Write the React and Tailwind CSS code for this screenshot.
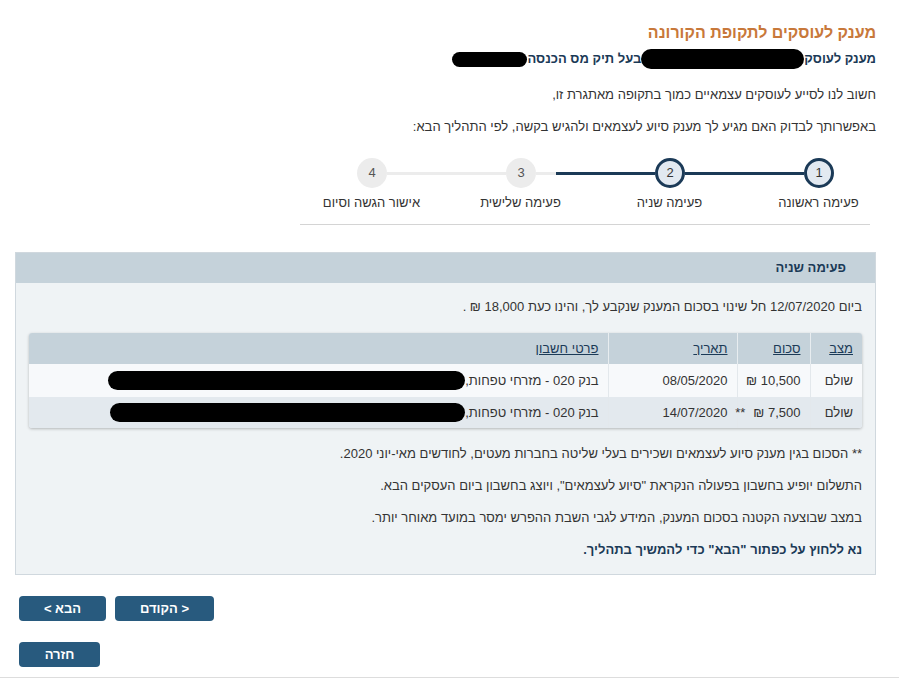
import React from "react";

const steps = [
  { n: 4, label: "אישור הגשה וסיום", done: false },
  { n: 3, label: "פעימה שלישית", done: false },
  { n: 2, label: "פעימה שניה", done: true },
  { n: 1, label: "פעימה ראשונה", done: true },
];

const rows = [
  { status: "שולם", sum: "10,500 ₪", star: false, date: "08/05/2020", bank: "בנק 020 - מזרחי טפחות,", blob: "w-[357px]", bg: "bg-[#f7f9fb]" },
  { status: "שולם", sum: "7,500 ₪", star: true, date: "14/07/2020", bank: "בנק 020 - מזרחי טפחות,", blob: "w-[355px]", bg: "bg-[#e3e9ee]" },
];

function Circle({ n, done }) {
  return done ? (
    <div className="w-[30px] h-[30px] rounded-full border-[3px] border-[#1b3a57] bg-[#e2e9f1] flex items-center justify-center text-[13px] text-[#333]">
      {n}
    </div>
  ) : (
    <div className="w-[30px] h-[30px] rounded-full bg-[#ececec] flex items-center justify-center text-[13px] text-[#555]">
      {n}
    </div>
  );
}

export default function App() {
  return (
    <div
      dir="rtl"
      className="min-h-screen bg-white text-[13px] text-[#333] pr-[23px] pl-[15px] pt-[23px]"
      style={{ fontFamily: '"Liberation Sans", Arial, "Noto Sans", sans-serif' }}
    >
      <h1 className="text-[16px] font-bold text-[#c8783a] leading-[20px]">מענק לעוסקים לתקופת הקורונה</h1>

      <div className="mt-[6px] flex items-center text-[13px] font-bold text-[#1b3a57] leading-[20px]">
        <span>מענק לעוסק</span>
        <span className="inline-block w-[163px] h-[20px] bg-black rounded-full" />
        <span>בעל תיק מס הכנסה</span>
        <span className="inline-block w-[75px] h-[15px] bg-black rounded-full" />
      </div>

      <p className="mt-[16px] leading-[20px]">חשוב לנו לסייע לעוסקים עצמאיים כמוך בתקופה מאתגרת זו,</p>
      <p className="mt-[12px] leading-[20px]">באפשרותך לבדוק האם מגיע לך מענק סיוע לעצמאים ולהגיש בקשה, לפי התהליך הבא:</p>

      {/* stepper */}
      <div dir="ltr" className="mt-[21px] mr-[-17px] ml-[282px]">
        <div className="flex items-center pl-[60px]">
          <Circle n={4} done={false} />
          <div className="w-[119px] h-[3px] bg-[#ececec]" />
          <Circle n={3} done={false} />
          <div className="w-[20px] h-[3px] bg-[#ececec]" />
          <div className="w-[99px] h-[3px] bg-[#1b3a57]" />
          <Circle n={2} done={true} />
          <div className="w-[119px] h-[3px] bg-[#1b3a57]" />
          <Circle n={1} done={true} />
        </div>
        <div className="flex mt-[6px]">
          {steps.map((s) => (
            <div key={s.n} dir="rtl" className="w-[149px] text-center leading-[18px] text-[#333]">
              {s.label}
            </div>
          ))}
        </div>
      </div>
      <div className="mt-[12px] mr-[6px] ml-[285px] h-px bg-[#d4d4d4]" />

      {/* panel */}
      <section className="mt-[27px] border border-[#d0d8de] bg-[#eff3f5]">
        <div className="h-[30px] bg-[#c5d2da] flex items-center pr-[29px] font-bold text-[#1b3a57]">פעימה שניה</div>
        <div className="px-[13px] pt-[14px] pb-[14px]">
          <p className="leading-[20px]">ביום 12/07/2020 חל שינוי בסכום המענק שנקבע לך, והינו כעת 18,000 ₪ .</p>

          <table className="mt-[16px] w-full table-fixed border-collapse shadow-[0_1px_3px_rgba(0,0,0,0.25)] rounded-[3px] overflow-hidden">
            <thead>
              <tr className="bg-[#c5d2da] h-[31px] text-[#1b3a57]">
                <th className="w-[52px] text-right font-normal px-[9px] underline border-l border-[#e8edf0]">מצב</th>
                <th className="w-[73px] text-right font-normal px-[9px] underline border-l border-[#e8edf0]">סכום</th>
                <th className="w-[129px] text-right font-normal px-[9px] underline border-l border-[#e8edf0]">תאריך</th>
                <th className="text-right font-normal px-[9px] underline">פרטי חשבון</th>
              </tr>
            </thead>
            <tbody>
              {rows.map((r, i) => (
                <tr key={i} className={`${r.bg} ${i === 0 ? "h-[33px]" : "h-[31px]"}`}>
                  <td className="px-[9px] border-l border-[#e3e8ec]">{r.status}</td>
                  <td className="px-[9px] border-l border-[#e3e8ec] whitespace-nowrap">
                    {r.sum}
                    {r.star && <span className="mr-[8px]">**</span>}
                  </td>
                  <td className="px-[9px] border-l border-[#e3e8ec]">{r.date}</td>
                  <td className="px-[9px]">
                    <div className="flex items-center">
                      <span>{r.bank}</span>
                      <span className={`inline-block ${r.blob} h-[19px] bg-black rounded-full`} />
                    </div>
                  </td>
                </tr>
              ))}
            </tbody>
          </table>

          <div className="mt-[16px] flex flex-col gap-[12px] leading-[20px]">
            <p>** הסכום בגין מענק סיוע לעצמאים ושכירים בעלי שליטה בחברות מעטים, לחודשים מאי-יוני 2020.</p>
            <p>התשלום יופיע בחשבון בפעולה הנקראת "סיוע לעצמאים", ויוצג בחשבון ביום העסקים הבא.</p>
            <p>במצב שבוצעה הקטנה בסכום המענק, המידע לגבי השבת ההפרש ימסר במועד מאוחר יותר.</p>
            <p className="font-bold text-[#1b3a57]">נא ללחוץ על כפתור "הבא" כדי להמשיך בתהליך.</p>
          </div>
        </div>
      </section>

      {/* buttons */}
      <div dir="ltr" className="mt-[21px] ml-[4px] flex flex-col gap-[21px] items-start">
        <div className="flex gap-[9px]">
          <button dir="rtl" className="w-[87px] h-[25px] rounded-[4px] bg-[#285a7e] text-white font-bold text-[13px]">הבא &gt;</button>
          <button dir="rtl" className="w-[99px] h-[25px] rounded-[4px] bg-[#285a7e] text-white font-bold text-[13px]">&lt; הקודם</button>
        </div>
        <button className="w-[81px] h-[25px] rounded-[4px] bg-[#285a7e] text-white font-bold text-[13px]">חזרה</button>
      </div>
      <div className="mt-[10px] h-px bg-[#ddd] ml-[-15px] mr-[-23px]" />
    </div>
  );
}
